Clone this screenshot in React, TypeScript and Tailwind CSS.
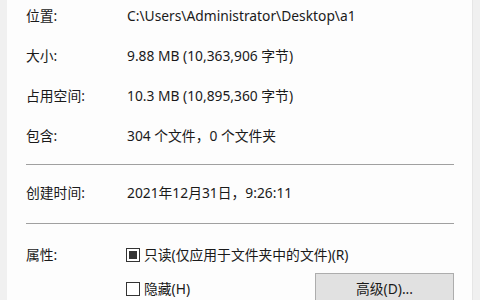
import React from "react";

const font = { fontFamily: '"Noto Sans", "Noto Sans CJK SC", sans-serif' };

function Row({ label, value }: { label: string; value: string }) {
  return (
    <div className="flex h-[40px] items-center">
      <div className="w-[101px] shrink-0">{label}</div>
      <div>{value}</div>
    </div>
  );
}

function Box({ checked }: { checked?: boolean }) {
  return (
    <div className="flex h-[14px] w-[14px] shrink-0 items-center justify-center border border-[#333333] bg-white">
      {checked && <div className="h-[8px] w-[8px] bg-[#333333]" />}
    </div>
  );
}

export default function App() {
  return (
    <div
      className="flex h-[300px] w-[480px] overflow-hidden bg-white text-[13.8px] text-[#1a1a1a]"
      style={font}
    >
      <div className="w-[7px] shrink-0 bg-[#f0f0f0]" />
      <div className="flex-1 bg-[#fdfdfd] pl-[19px] pr-[18px]">
        <div className="mt-[-4px]">
          <Row label="位置:" value="C:\Users\Administrator\Desktop\a1" />
          <Row label="大小:" value="9.88 MB (10,363,906 字节)" />
          <Row label="占用空间:" value="10.3 MB (10,895,360 字节)" />
          <Row label="包含:" value="304 个文件，0 个文件夹" />
        </div>
        <div className="mt-[8px] h-px bg-[#a0a0a0]" />
        <div className="mt-[8px]">
          <Row label="创建时间:" value="2021年12月31日，9:26:11" />
        </div>
        <div className="mt-[10px] h-px bg-[#a0a0a0]" />
        <div className="mt-[11px] flex h-[40px] items-center">
          <div className="w-[100px] shrink-0">属性:</div>
          <div className="flex items-center gap-[4px]">
            <Box checked />
            <span>只读(仅应用于文件夹中的文件)(R)</span>
          </div>
        </div>
        <div className="mt-[-2px] flex h-[32px] items-center">
          <div className="w-[100px] shrink-0" />
          <div className="flex items-center gap-[4px]">
            <Box />
            <span>隐藏(H)</span>
          </div>
          <div className="ml-auto flex h-[32px] w-[139px] items-center justify-center border border-[#adadad] bg-[#e1e1e1]">
            高级(D)...
          </div>
        </div>
      </div>
      <div className="w-[8px] shrink-0 border-l border-[#e6e6e6] bg-[#f0f0f0]" />
    </div>
  );
}
